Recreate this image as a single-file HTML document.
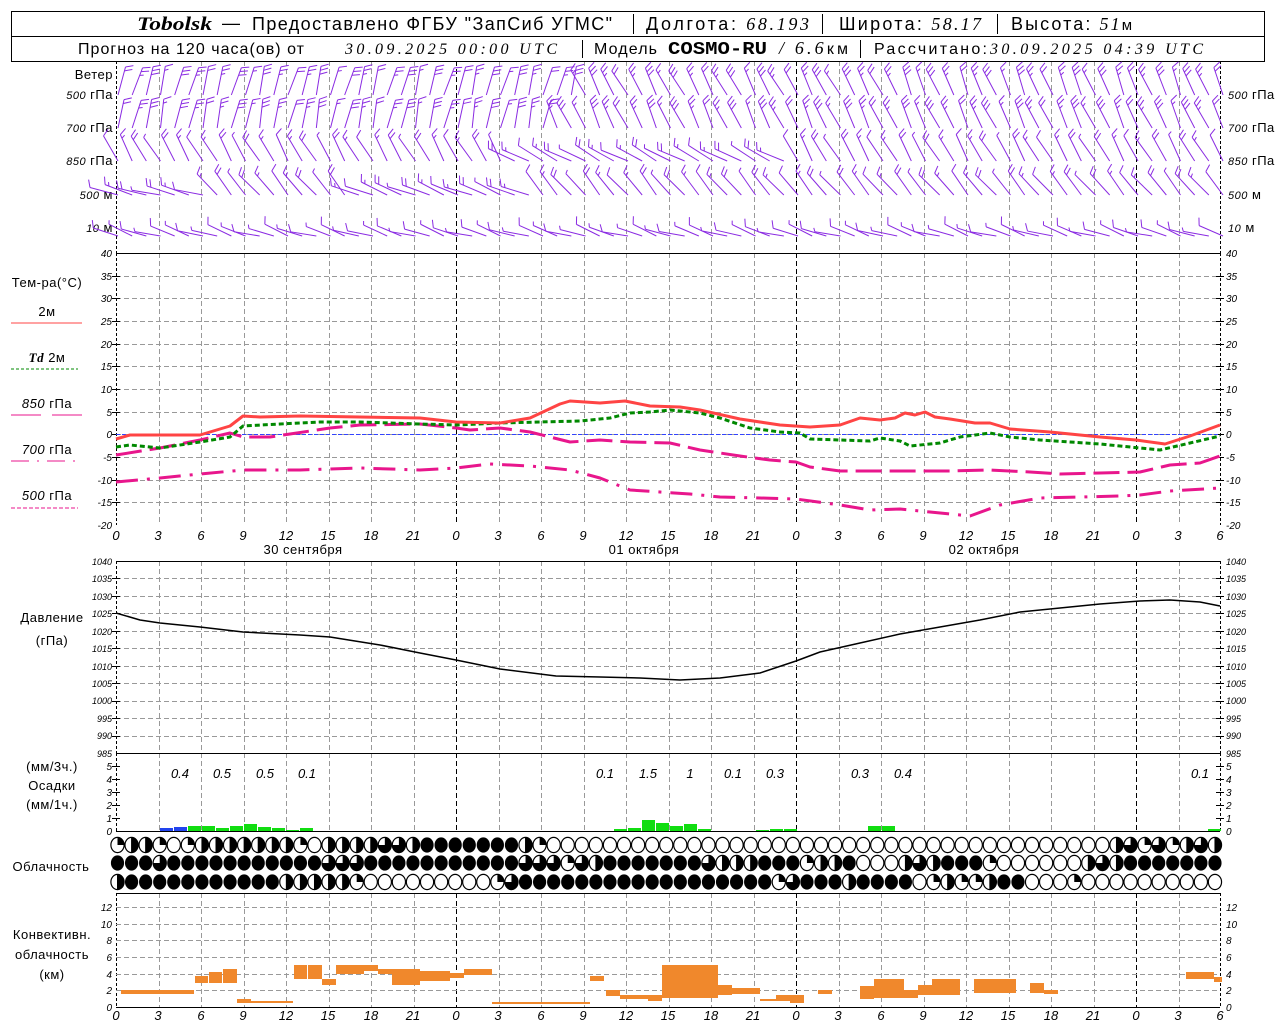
<!DOCTYPE html>
<html><head><meta charset="utf-8">
<style>
html,body{margin:0;padding:0;background:#fff}
svg{display:block;font-family:"Liberation Sans",sans-serif}
.t{font-size:13px;fill:#000;letter-spacing:0.5px}
.n{font-size:10px;font-style:italic;fill:#000}
.x{font-size:13px;font-style:italic;fill:#000;text-anchor:middle}
.l{text-anchor:end}
.c{text-anchor:middle}
.h1{font-size:18px}
.h2{font-size:16px}
.it{font-style:italic;font-family:"Liberation Serif",serif}
</style></head><body>
<svg id="s" width="1280" height="1024" viewBox="0 0 1280 1024" xmlns="http://www.w3.org/2000/svg">
<rect x="0" y="0" width="1280" height="1024" fill="#fff"/>
<g id="grid"></g>
<!-- header -->
<rect x="11.5" y="11.5" width="1253" height="50" fill="none" stroke="#000"/>
<line x1="11" y1="36.5" x2="1265" y2="36.5" stroke="#000"/>
<text x="137" y="30" textLength="75" lengthAdjust="spacingAndGlyphs" style="font-size:19px;font-family:'Liberation Serif',serif;font-style:italic;font-weight:bold">Tobolsk</text>
<text class="h1" x="222" y="29" textLength="18" lengthAdjust="spacingAndGlyphs">—</text>
<text class="h1" x="252" y="30" textLength="360" lengthAdjust="spacing">Предоставлено ФГБУ "ЗапСиб УГМС"</text>
<line x1="633.5" y1="14" x2="633.5" y2="34" stroke="#000"/>
<text class="h1" x="646" y="30" textLength="163" lengthAdjust="spacing">Долгота: <tspan class="it">68.193</tspan></text>
<line x1="822.5" y1="14" x2="822.5" y2="34" stroke="#000"/>
<text class="h1" x="839" y="30" textLength="142" lengthAdjust="spacing">Широта: <tspan class="it">58.17</tspan></text>
<line x1="997.5" y1="14" x2="997.5" y2="34" stroke="#000"/>
<text class="h1" x="1011" y="30" textLength="121" lengthAdjust="spacing">Высота: <tspan class="it">51</tspan><tspan font-size="15">м</tspan></text>
<text class="h2" x="78" y="54" textLength="226" lengthAdjust="spacing">Прогноз на 120 часа(ов) от</text>
<text class="h2 it" x="345" y="54" textLength="212" lengthAdjust="spacing" font-size="18">30.09.2025 00:00 UTC</text>
<line x1="582.5" y1="40" x2="582.5" y2="58" stroke="#000"/>
<text class="h2" x="594" y="54" textLength="63" lengthAdjust="spacing">Модель</text>
<text x="668" y="54" textLength="99" lengthAdjust="spacingAndGlyphs" style="font-size:18px;font-weight:bold;font-family:'Liberation Mono',monospace">COSMO-RU</text>
<text class="h2" x="779" y="54" textLength="69" lengthAdjust="spacing"><tspan class="it" font-size="18">/ 6.6</tspan>км</text>
<line x1="860.5" y1="40" x2="860.5" y2="58" stroke="#000"/>
<text class="h2" x="874" y="54" textLength="113" lengthAdjust="spacing">Рассчитано:</text>
<text class="h2 it" x="990" y="54" textLength="213" lengthAdjust="spacing" font-size="18">30.09.2025 04:39 UTC</text>

<!-- wind labels -->
<text class="t l" x="113" y="79">Ветер</text>
<text class="t l" x="113" y="99"><tspan font-style="italic" font-size="11">500</tspan> гПа</text>
<text class="t l" x="113" y="132"><tspan font-style="italic" font-size="11">700</tspan> гПа</text>
<text class="t l" x="113" y="165"><tspan font-style="italic" font-size="11">850</tspan> гПа</text>
<text class="t l" x="113" y="199"><tspan font-style="italic" font-size="11">500</tspan> м</text>
<text class="t l" x="113" y="232"><tspan font-style="italic" font-size="11">10</tspan>   м</text>
<text class="t" x="1228" y="99"><tspan font-style="italic" font-size="11">500</tspan> гПа</text>
<text class="t" x="1228" y="132"><tspan font-style="italic" font-size="11">700</tspan> гПа</text>
<text class="t" x="1228" y="165"><tspan font-style="italic" font-size="11">850</tspan> гПа</text>
<text class="t" x="1228" y="199"><tspan font-style="italic" font-size="11">500</tspan> м</text>
<text class="t" x="1228" y="232"><tspan font-style="italic" font-size="11">10</tspan>   м</text>

<!-- temp legend -->
<text class="t c" x="47" y="287">Тем-ра(°С)</text>
<text class="t c" x="47" y="316">2м</text>
<line x1="11" y1="323" x2="82" y2="323" stroke="#ff4444"/>
<text class="t c" x="47" y="362"><tspan font-style="italic" font-weight="bold" font-family="Liberation Serif,serif">Td</tspan>  2м</text>
<line x1="11" y1="369" x2="78" y2="369" stroke="#008800" stroke-dasharray="3,2"/>
<text class="t c" x="47" y="408"><tspan font-style="italic">850</tspan>  гПа</text>
<line x1="11" y1="415" x2="41" y2="415" stroke="#e8168c"/><line x1="52" y1="415" x2="82" y2="415" stroke="#e8168c"/>
<text class="t c" x="47" y="454"><tspan font-style="italic">700</tspan>  гПа</text>
<line x1="11" y1="461" x2="82" y2="461" stroke="#e8168c" stroke-dasharray="18,8,2,8"/>
<text class="t c" x="47" y="500"><tspan font-style="italic">500</tspan>  гПа</text>
<line x1="11" y1="508" x2="78" y2="508" stroke="#e8168c" stroke-dasharray="4,2"/>

<!-- temp ticks -->
<g class="n">
<text class="l" x="112" y="257">40</text><text class="l" x="112" y="280">35</text><text class="l" x="112" y="302">30</text><text class="l" x="112" y="325">25</text><text class="l" x="112" y="348">20</text><text class="l" x="112" y="370">15</text><text class="l" x="112" y="393">10</text><text class="l" x="112" y="416">5</text><text class="l" x="112" y="438">0</text><text class="l" x="112" y="461">-5</text><text class="l" x="112" y="484">-10</text><text class="l" x="112" y="506">-15</text><text class="l" x="112" y="529">-20</text>
<text x="1226" y="257">40</text><text x="1226" y="280">35</text><text x="1226" y="302">30</text><text x="1226" y="325">25</text><text x="1226" y="348">20</text><text x="1226" y="370">15</text><text x="1226" y="393">10</text><text x="1226" y="416">5</text><text x="1226" y="438">0</text><text x="1226" y="461">-5</text><text x="1226" y="484">-10</text><text x="1226" y="506">-15</text><text x="1226" y="529">-20</text>
</g>
<!-- x labels -->
<g class="x">
<text x="116" y="540">0</text><text x="158" y="540">3</text><text x="201" y="540">6</text><text x="243" y="540">9</text><text x="286" y="540">12</text><text x="328" y="540">15</text><text x="371" y="540">18</text><text x="413" y="540">21</text><text x="456" y="540">0</text><text x="498" y="540">3</text><text x="541" y="540">6</text><text x="583" y="540">9</text><text x="626" y="540">12</text><text x="668" y="540">15</text><text x="711" y="540">18</text><text x="753" y="540">21</text><text x="796" y="540">0</text><text x="838" y="540">3</text><text x="881" y="540">6</text><text x="923" y="540">9</text><text x="966" y="540">12</text><text x="1008" y="540">15</text><text x="1051" y="540">18</text><text x="1093" y="540">21</text><text x="1136" y="540">0</text><text x="1178" y="540">3</text><text x="1220" y="540">6</text>
</g>
<text class="t c" x="303" y="554">30 сентября</text>
<text class="t c" x="644" y="554">01 октября</text>
<text class="t c" x="984" y="554">02 октября</text>

<!-- pressure -->
<text class="t c" x="52" y="622">Давление</text>
<text class="t c" x="52" y="645">(гПа)</text>
<g class="n" style="font-size:9px">
<text class="l" x="112" y="565">1040</text><text class="l" x="112" y="582">1035</text><text class="l" x="112" y="600">1030</text><text class="l" x="112" y="617">1025</text><text class="l" x="112" y="635">1020</text><text class="l" x="112" y="652">1015</text><text class="l" x="112" y="670">1010</text><text class="l" x="112" y="687">1005</text><text class="l" x="112" y="704">1000</text><text class="l" x="112" y="722">995</text><text class="l" x="112" y="739">990</text><text class="l" x="112" y="757">985</text>
<text x="1226" y="565">1040</text><text x="1226" y="582">1035</text><text x="1226" y="600">1030</text><text x="1226" y="617">1025</text><text x="1226" y="635">1020</text><text x="1226" y="652">1015</text><text x="1226" y="670">1010</text><text x="1226" y="687">1005</text><text x="1226" y="704">1000</text><text x="1226" y="722">995</text><text x="1226" y="739">990</text><text x="1226" y="757">985</text>
</g>

<!-- precip -->
<text class="t c" x="52" y="771">(мм/3ч.)</text>
<text class="t c" x="52" y="790">Осадки</text>
<text class="t c" x="52" y="809">(мм/1ч.)</text>
<g class="n">
<text class="l" x="112" y="770">5</text><text class="l" x="112" y="783">4</text><text class="l" x="112" y="796">3</text><text class="l" x="112" y="809">2</text><text class="l" x="112" y="822">1</text><text class="l" x="112" y="835">0</text>
<text x="1226" y="770">5</text><text x="1226" y="783">4</text><text x="1226" y="796">3</text><text x="1226" y="809">2</text><text x="1226" y="822">1</text><text x="1226" y="835">0</text>
</g>
<g class="x">
<text x="180" y="778">0.4</text><text x="222" y="778">0.5</text><text x="265" y="778">0.5</text><text x="307" y="778">0.1</text>
<text x="605" y="778">0.1</text><text x="648" y="778">1.5</text><text x="690" y="778">1</text><text x="733" y="778">0.1</text><text x="775" y="778">0.3</text>
<text x="860" y="778">0.3</text><text x="903" y="778">0.4</text><text x="1200" y="778">0.1</text>
</g>

<text class="t c" x="51" y="871">Облачность</text>

<text class="t c" x="52" y="939">Конвективн.</text>
<text class="t c" x="52" y="959">облачность</text>
<text class="t c" x="52" y="979">(км)</text>
<g class="n">
<text class="l" x="112" y="911">12</text><text class="l" x="112" y="928">10</text><text class="l" x="112" y="944">8</text><text class="l" x="112" y="961">6</text><text class="l" x="112" y="978">4</text><text class="l" x="112" y="994">2</text><text class="l" x="112" y="1011">0</text>
<text x="1226" y="911">12</text><text x="1226" y="928">10</text><text x="1226" y="944">8</text><text x="1226" y="961">6</text><text x="1226" y="978">4</text><text x="1226" y="994">2</text><text x="1226" y="1011">0</text>
</g>
<g class="x">
<text x="116" y="1020">0</text><text x="158" y="1020">3</text><text x="201" y="1020">6</text><text x="243" y="1020">9</text><text x="286" y="1020">12</text><text x="328" y="1020">15</text><text x="371" y="1020">18</text><text x="413" y="1020">21</text><text x="456" y="1020">0</text><text x="498" y="1020">3</text><text x="541" y="1020">6</text><text x="583" y="1020">9</text><text x="626" y="1020">12</text><text x="668" y="1020">15</text><text x="711" y="1020">18</text><text x="753" y="1020">21</text><text x="796" y="1020">0</text><text x="838" y="1020">3</text><text x="881" y="1020">6</text><text x="923" y="1020">9</text><text x="966" y="1020">12</text><text x="1008" y="1020">15</text><text x="1051" y="1020">18</text><text x="1093" y="1020">21</text><text x="1136" y="1020">0</text><text x="1178" y="1020">3</text><text x="1220" y="1020">6</text>
</g>
<g id="dyn"></g>
</svg>
<script>
(function(){
var NS="http://www.w3.org/2000/svg";
var G=document.getElementById("grid"), D=document.getElementById("dyn");
function el(p,tag,a){var e=document.createElementNS(NS,tag);for(var k in a)e.setAttribute(k,a[k]);p.appendChild(e);return e;}
function ln(p,x1,y1,x2,y2,c,w,da){var a={x1:x1,y1:y1,x2:x2,y2:y2,stroke:c,"stroke-width":w||1};if(da)a["stroke-dasharray"]=da;return el(p,"line",a);}
var X0=116, HX=42.5/3;
function X(h){return X0+h*HX;}
var panels=[[61,253],[253,525],[561,753],[753,831],[893,1007]];
panels.forEach(function(p,pi){
  for(var i=1;i<26;i++){var x=Math.round(X0+i*42.5)+0.5;
    var day=(i%8==0);
    ln(G,x,p[0],x,p[1],day?"#000":"#999",1,"5,3");}
  ln(G,116.5,p[0],116.5,p[1],"#000",1,"3,2");
  ln(G,1220.5,p[0],1220.5,p[1],"#000",1,"3,2");
});
for(var k=1;k<12;k++){var y=Math.round(253+k*272/12)+0.5;ln(G,116,y,1220,y,"#999",1,"5,3");ln(G,112,y,120,y,"#000");ln(G,1216,y,1224,y,"#000");}
for(var k=1;k<11;k++){var y=Math.round(561+k*192/11)+0.5;ln(G,116,y,1220,y,"#999",1,"5,3");ln(G,112,y,120,y,"#000");ln(G,1216,y,1224,y,"#000");}
for(var k=1;k<6;k++){var y=Math.round(907+k*100/6)+0.5;ln(G,116,y,1220,y,"#999",1,"5,3");}
for(var k=1;k<6;k++){var y=831-k*13+0.5;ln(G,112,y,120,y,"#000");ln(G,1216,y,1224,y,"#000");}
ln(G,116,907.5,1220,907.5,"#999",1,"5,3");
[253.5,561.5,753.5,831.5,893.5,1007.5].forEach(function(y){ln(G,116,y,1220,y,"#000",1);});
ln(G,116,434.5,1220,434.5,"#3344ff",1,"4,2");

var rows=[{y:95,n:3},{y:128,n:3},{y:161,n:2},{y:195,n:2},{y:236,n:1}];
function ang(r,h){var v=Math.sin(h*1.7)*6;
 if(r==0)return (h<33?15:(h<55?-28:-22))+v;
 if(r==1)return (h<31?12:-25)+v;
 if(r==2)return (h<28?-30:(h<48?-62:-30))+v;
 if(r==3)return (h<7?-75:(h<17?-40:(h<30?-68:-40)))+v;
 return -72+v*1.5;}
var P="#8a2be2";
rows.forEach(function(R,r){
 for(var h=0;h<=78;h++){
  var x=X(h)+2, y=R.y, a=ang(r,h)*Math.PI/180, L=(r==4?26:29);
  var dx=Math.sin(a), dy=-Math.cos(a);
  var tx=x+dx*L, ty=y+dy*L;
  ln(D,x,y,tx,ty,P,1);
  var n=R.n-((h*7)%3==0&&R.n>1?1:0);
  var fa=a+65*Math.PI/180;
  for(var f=0;f<n;f++){var bx=tx-dx*f*4, by=ty-dy*f*4;var fl=(f==n-1&&h%2)?4:8;
    ln(D,bx,by,bx+Math.sin(fa)*fl,by-Math.cos(fa)*fl,P,1);}
 }
});

function poly(pts,c,w,da){var s=pts.map(function(p){return p[0]+","+p[1];}).join(" ");var a={points:s,fill:"none",stroke:c,"stroke-width":w,"stroke-linejoin":"round"};if(da)a["stroke-dasharray"]=da;el(D,"polyline",a);}
var M="#e8168c";
poly([[116,482],[160,478],[200,474],[243,470],[300,470],[360,468],[420,470],[456,468],[490,464],[530,466],[570,470],[600,478],[630,490],[660,492],[690,494],[720,497],[760,498],[796,499],[840,505],[870,510],[900,509],[930,512],[970,516],[1000,505],[1040,498],[1080,497],[1120,496],[1140,495],[1170,491],[1220,488]],M,3,"22,9,3,9");
poly([[116,455],[160,448],[200,440],[230,433],[243,437],[270,437],[290,434],[330,428],[360,425],[420,424],[456,428],[470,430],[500,428],[530,432],[570,442],[600,440],[630,442],[670,443],[700,450],[740,456],[770,460],[796,462],[810,467],[840,471],[900,471],[950,471],[990,470],[1030,472],[1060,474],[1100,473],[1140,472],[1170,465],[1200,463],[1220,456]],M,3,"26,8");
poly([[116,447],[130,445],[160,448],[200,442],[230,437],[243,426],[280,424],[320,422],[360,422],[420,424],[456,425],[500,423],[540,422],[580,421],[610,418],[630,413],[650,412],[670,410],[700,413],[720,418],[750,428],[780,432],[800,433],[810,439],[840,440],[870,441],[880,438],[900,441],[910,446],[940,443],[960,437],[990,433],[1010,437],[1040,440],[1100,444],[1160,450],[1190,443],[1220,436]],"#008800",3,"5,3");
poly([[116,439],[130,435],[200,435],[230,426],[243,416],[260,417],[300,416],[360,417],[420,418],[456,422],[500,423],[530,418],[560,404],[570,401],[600,403],[625,401],[650,406],[680,407],[700,410],[740,419],[780,425],[810,427],[840,425],[860,418],[880,420],[895,418],[905,413],[915,415],[925,412],[935,417],[950,419],[975,423],[990,423],[1010,429],[1050,432],[1100,437],[1136,440],[1165,444],[1190,436],[1220,425]],"#ff4444",3);
poly([[116,613],[140,620],[160,623],[200,627],[243,632],[300,635],[330,637],[380,645],[420,653],[456,660],[500,669],[556,676],[600,677],[640,678],[680,680],[720,678],[760,673],[796,661],[820,652],[860,643],[900,634],[940,627],[980,620],[1020,612],[1060,608],[1100,604],[1140,601],[1170,600],[1200,602],[1220,606]],"#000",1.5);
var pb=[[160,3,"#2244ee"],[174,4,"#2244ee"],[188,5],[202,5],[216,3],[230,5],[244,7],[258,4],[272,3],[286,1],[300,3],[614,2],[628,3],[642,11],[656,8],[670,5],[684,7],[698,2],[756,1],[770,2],[784,2],[868,5],[882,5],[1208,2]];
pb.forEach(function(b){el(D,"rect",{x:b[0],y:831-b[1],width:13,height:b[1],fill:b[2]||"#11dd11"});});
var cb=[[121,194,990,994],[195,208,976,983],[209,222,972,983],[223,237,969,983],[237,251,999,1003],[251,293,1001,1003],[294,307,965,979],[308,322,965,979],[322,336,979,985],[336,364,965,974],[364,378,965,971],[378,392,969,974],[392,420,969,985],[420,450,971,981],[450,464,973,978],[464,492,969,975],[492,590,1002,1004],[590,604,976,981],[606,620,990,996],[620,650,995,999],[648,662,995,1001],[662,718,965,998],[718,732,985,995],[732,760,988,994],[760,776,999,1001],[776,790,995,1001],[790,804,995,1003],[818,832,990,994],[860,874,986,999],[874,904,979,998],[904,918,990,998],[918,932,985,995],[932,960,979,995],[974,1016,979,993],[1030,1044,983,993],[1044,1058,990,994],[1186,1214,972,979],[1214,1222,977,982]];
cb.forEach(function(b){el(D,"rect",{x:b[0],y:b[2],width:b[1]-b[0],height:b[3]-b[2],fill:"#f0882c"});});
var r1="1221012222222102222332"+"4444444"+"21"+"0000000000000000000000000000000000000000"+"231312323";
var r2="4443444444444443334444"+"4444444"+"33313244444443222444122400023244410000002324444444";
var r3="2444444444442222210000"+"0000013"+"444444444444444444134442444401211244000100000000000024";
[[845,r1],[863,r2],[882,r3]].forEach(function(R){
 for(var i=0;i<79;i++){var cx=117.5+i*14.07, cy=R[0], rx=6.6, ry=7.6;
  var v=parseInt(R[1].charAt(i)||"0");
  if(v==4){el(D,"ellipse",{cx:cx,cy:cy,rx:rx,ry:ry,fill:"#000"});continue;}
  el(D,"ellipse",{cx:cx,cy:cy,rx:rx,ry:ry,fill:"#fff",stroke:"#000","stroke-width":1.2});
  if(v>0){var a1=-Math.PI/2,a2=a1+v*Math.PI/2;
   var d="M"+cx+","+cy+" L"+(cx+rx*Math.cos(a1))+","+(cy+ry*Math.sin(a1))+" A"+rx+","+ry+" 0 "+(v>2?1:0)+" 1 "+(cx+rx*Math.cos(a2))+","+(cy+ry*Math.sin(a2))+" Z";
   el(D,"path",{d:d,fill:"#000"});
   if(v==2)ln(D,cx,cy-ry,cx,cy+ry,"#000",1);}
 }
});
})();
</script>
</body></html>
